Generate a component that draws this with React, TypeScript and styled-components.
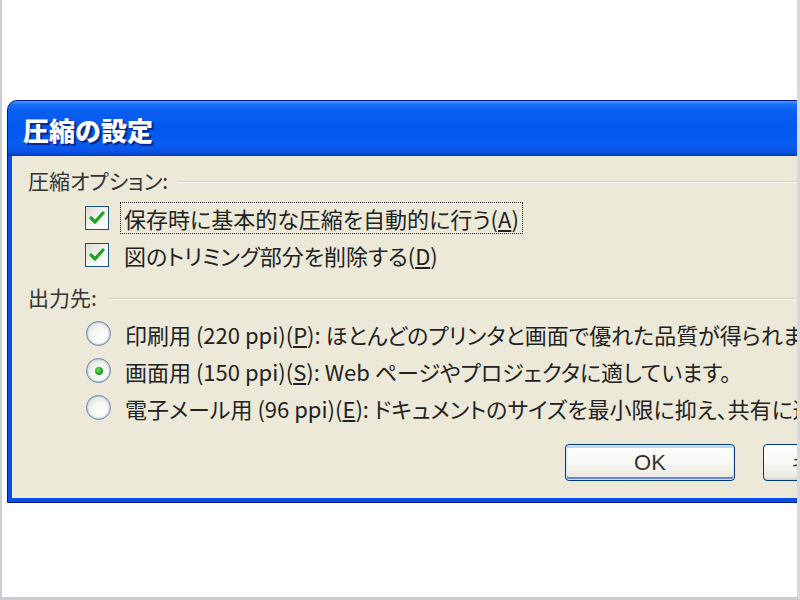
import React from "react";
import styled, { createGlobalStyle } from "styled-components";

const Global = createGlobalStyle`
  html, body { margin: 0; padding: 0; background: #ffffff; }
  body { font-family: "Noto Sans CJK JP", "Noto Sans", sans-serif; }
`;

const Frame = styled.div`
  width: 800px;
  height: 600px;
  box-sizing: border-box;
  border-left: 2px solid #c9cdd3;
  border-right: 3px solid #d6dadf;
  border-bottom: 3px solid #c9cdd3;
  background: #ffffff;
  overflow: hidden;
  padding-top: 100px;
  padding-left: 5px;
`;

const Dialog = styled.div`
  width: 1040px;
  box-sizing: border-box;
  background: #0a4fe2;
  border: 1px solid #001a8a;
  border-radius: 10px 10px 0 0;
  display: flex;
  flex-direction: column;
`;

const TitleBar = styled.div`
  height: 55px;
  border-radius: 9px 9px 0 0;
  background: linear-gradient(
    to bottom,
    #4a9bff 0%,
    #1a6ff8 6%,
    #0a5ef0 20%,
    #0058ee 55%,
    #0a5cf2 80%,
    #0a50e0 94%,
    #0038c0 100%
  );
  display: flex;
  align-items: center;
  padding-left: 15px;
`;

const Title = styled.span`
  font-family: "Noto Sans CJK JP", sans-serif;
  font-weight: 900;
  font-size: 26px;
  color: #ffffff;
  text-shadow: 1px 1px 0 #0b2a9a, 2px 2px 1px #0a2280;
  line-height: 1;
  margin-top: 2px;
`;

const Body = styled.div`
  background: #ece9d8;
  margin: 0 4px 4px 4px;
  padding: 10px 0 17px 16px;
  display: flex;
  flex-direction: column;
  font-family: "Noto Sans CJK JP", sans-serif;
  font-size: 22px;
  font-feature-settings: "palt";
  color: #222222;
`;

const GroupHeader = styled.div<{ $top?: number }>`
  height: 28px;
  display: flex;
  align-items: center;
  gap: 10px;
  margin-top: ${(p) => p.$top ?? 0}px;
`;

const GroupLabel = styled.span`
  white-space: nowrap;
  color: #333333;
  font-size: 21px;
`;

const GroupLine = styled.div`
  flex: 1;
  height: 1px;
  background: #d0d0bf;
  border-bottom: 1px solid #ffffff;
  margin-top: 4px;
`;

const Row = styled.div`
  height: 37px;
  display: flex;
  align-items: center;
  padding-left: 57px;
  white-space: nowrap;
`;

const Rows = styled.div<{ $top?: number }>`
  display: flex;
  flex-direction: column;
  margin-top: ${(p) => p.$top ?? 0}px;
`;

const CheckBox = styled.span`
  width: 22px;
  height: 22px;
  flex: none;
  border: 1px solid #1c5180;
  background: linear-gradient(135deg, #dcdcd7 0%, #f4f4f0 55%, #ffffff 100%);
  display: flex;
  align-items: center;
  justify-content: center;
`;

const Radio = styled.span<{ $on?: boolean }>`
  width: 23px;
  height: 23px;
  flex: none;
  margin-left: 1px;
  border-radius: 50%;
  border: 1px solid #6b84a8;
  box-shadow: inset 0 0 0 1px #c6d2e2;
  background: radial-gradient(circle at 60% 65%, #ffffff 0%, #f4f4ef 45%, #d8d8d0 100%);
  display: flex;
  align-items: center;
  justify-content: center;
  &::after {
    content: "";
    display: ${(p) => (p.$on ? "block" : "none")};
    width: 8px;
    height: 8px;
    border-radius: 50%;
    background: radial-gradient(circle at 40% 40%, #6ee06e 0%, #21a121 60%, #1a8a1a 100%);
  }
`;

const Label = styled.span<{ $focus?: boolean; $gap: number }>`
  margin-left: ${(p) => p.$gap}px;
  padding: 3px 3px;
  border: 1px dotted ${(p) => (p.$focus ? "#222222" : "transparent")};
  line-height: 24px;
`;

const U = styled.span`
  text-decoration: underline;
  text-underline-offset: 2px;
`;

const ButtonRow = styled.div`
  display: flex;
  gap: 28px;
  margin-top: 18px;
  padding-left: 537px;
`;

const Button = styled.button<{ $default?: boolean }>`
  width: 170px;
  height: 37px;
  flex: none;
  box-sizing: border-box;
  border: 1px solid #003c74;
  border-radius: 4px;
  background: linear-gradient(to bottom, #ffffff 0%, #f7f7f4 50%, #eceae0 90%, #d6d0c5 100%);
  box-shadow: ${(p) =>
    p.$default
      ? "inset 0 0 0 1px #cee7ff, inset 0 -2px 0 1px #6982ee, inset 0 2px 0 1px #bcd4f6"
      : "none"};
  font-family: "Liberation Sans", "Noto Sans", sans-serif;
  font-size: 22px;
  color: #333333;
  padding: 0;
`;

const CheckMark = () => (
  <svg width="16" height="14" viewBox="0 0 16 14">
    <path d="M2 7 L6 11 L14 2" fill="none" stroke="#21a121" strokeWidth="3.2" strokeLinecap="round" strokeLinejoin="round" />
  </svg>
);

export default function App() {
  return (
    <>
      <Global />
      <Frame>
        <Dialog>
          <TitleBar>
            <Title>圧縮の設定</Title>
          </TitleBar>
          <Body>
            <GroupHeader>
              <GroupLabel>圧縮オプション:</GroupLabel>
              <GroupLine />
            </GroupHeader>
            <Rows $top={5}>
              <Row>
                <CheckBox>
                  <CheckMark />
                </CheckBox>
                <Label $focus $gap={11}>
                  保存時に基本的な圧縮を自動的に行う(<U>A</U>)
                </Label>
              </Row>
              <Row>
                <CheckBox>
                  <CheckMark />
                </CheckBox>
                <Label $gap={11}>
                  図のトリミング部分を削除する(<U>D</U>)
                </Label>
              </Row>
            </Rows>
            <GroupHeader $top={10}>
              <GroupLabel>出力先:</GroupLabel>
              <GroupLine />
            </GroupHeader>
            <Rows $top={4}>
              <Row>
                <Radio />
                <Label $gap={10}>
                  印刷用 (220 ppi)(<U>P</U>): ほとんどのプリンタと画面で優れた品質が得られます。
                </Label>
              </Row>
              <Row>
                <Radio $on />
                <Label $gap={10}>
                  画面用 (150 ppi)(<U>S</U>): Web ページやプロジェクタに適しています。
                </Label>
              </Row>
              <Row>
                <Radio />
                <Label $gap={10}>
                  電子メール用 (96 ppi)(<U>E</U>): ドキュメントのサイズを最小限に抑え、共有に適しています。
                </Label>
              </Row>
            </Rows>
            <ButtonRow>
              <Button $default>OK</Button>
              <Button>キャンセル</Button>
            </ButtonRow>
          </Body>
        </Dialog>
      </Frame>
    </>
  );
}
